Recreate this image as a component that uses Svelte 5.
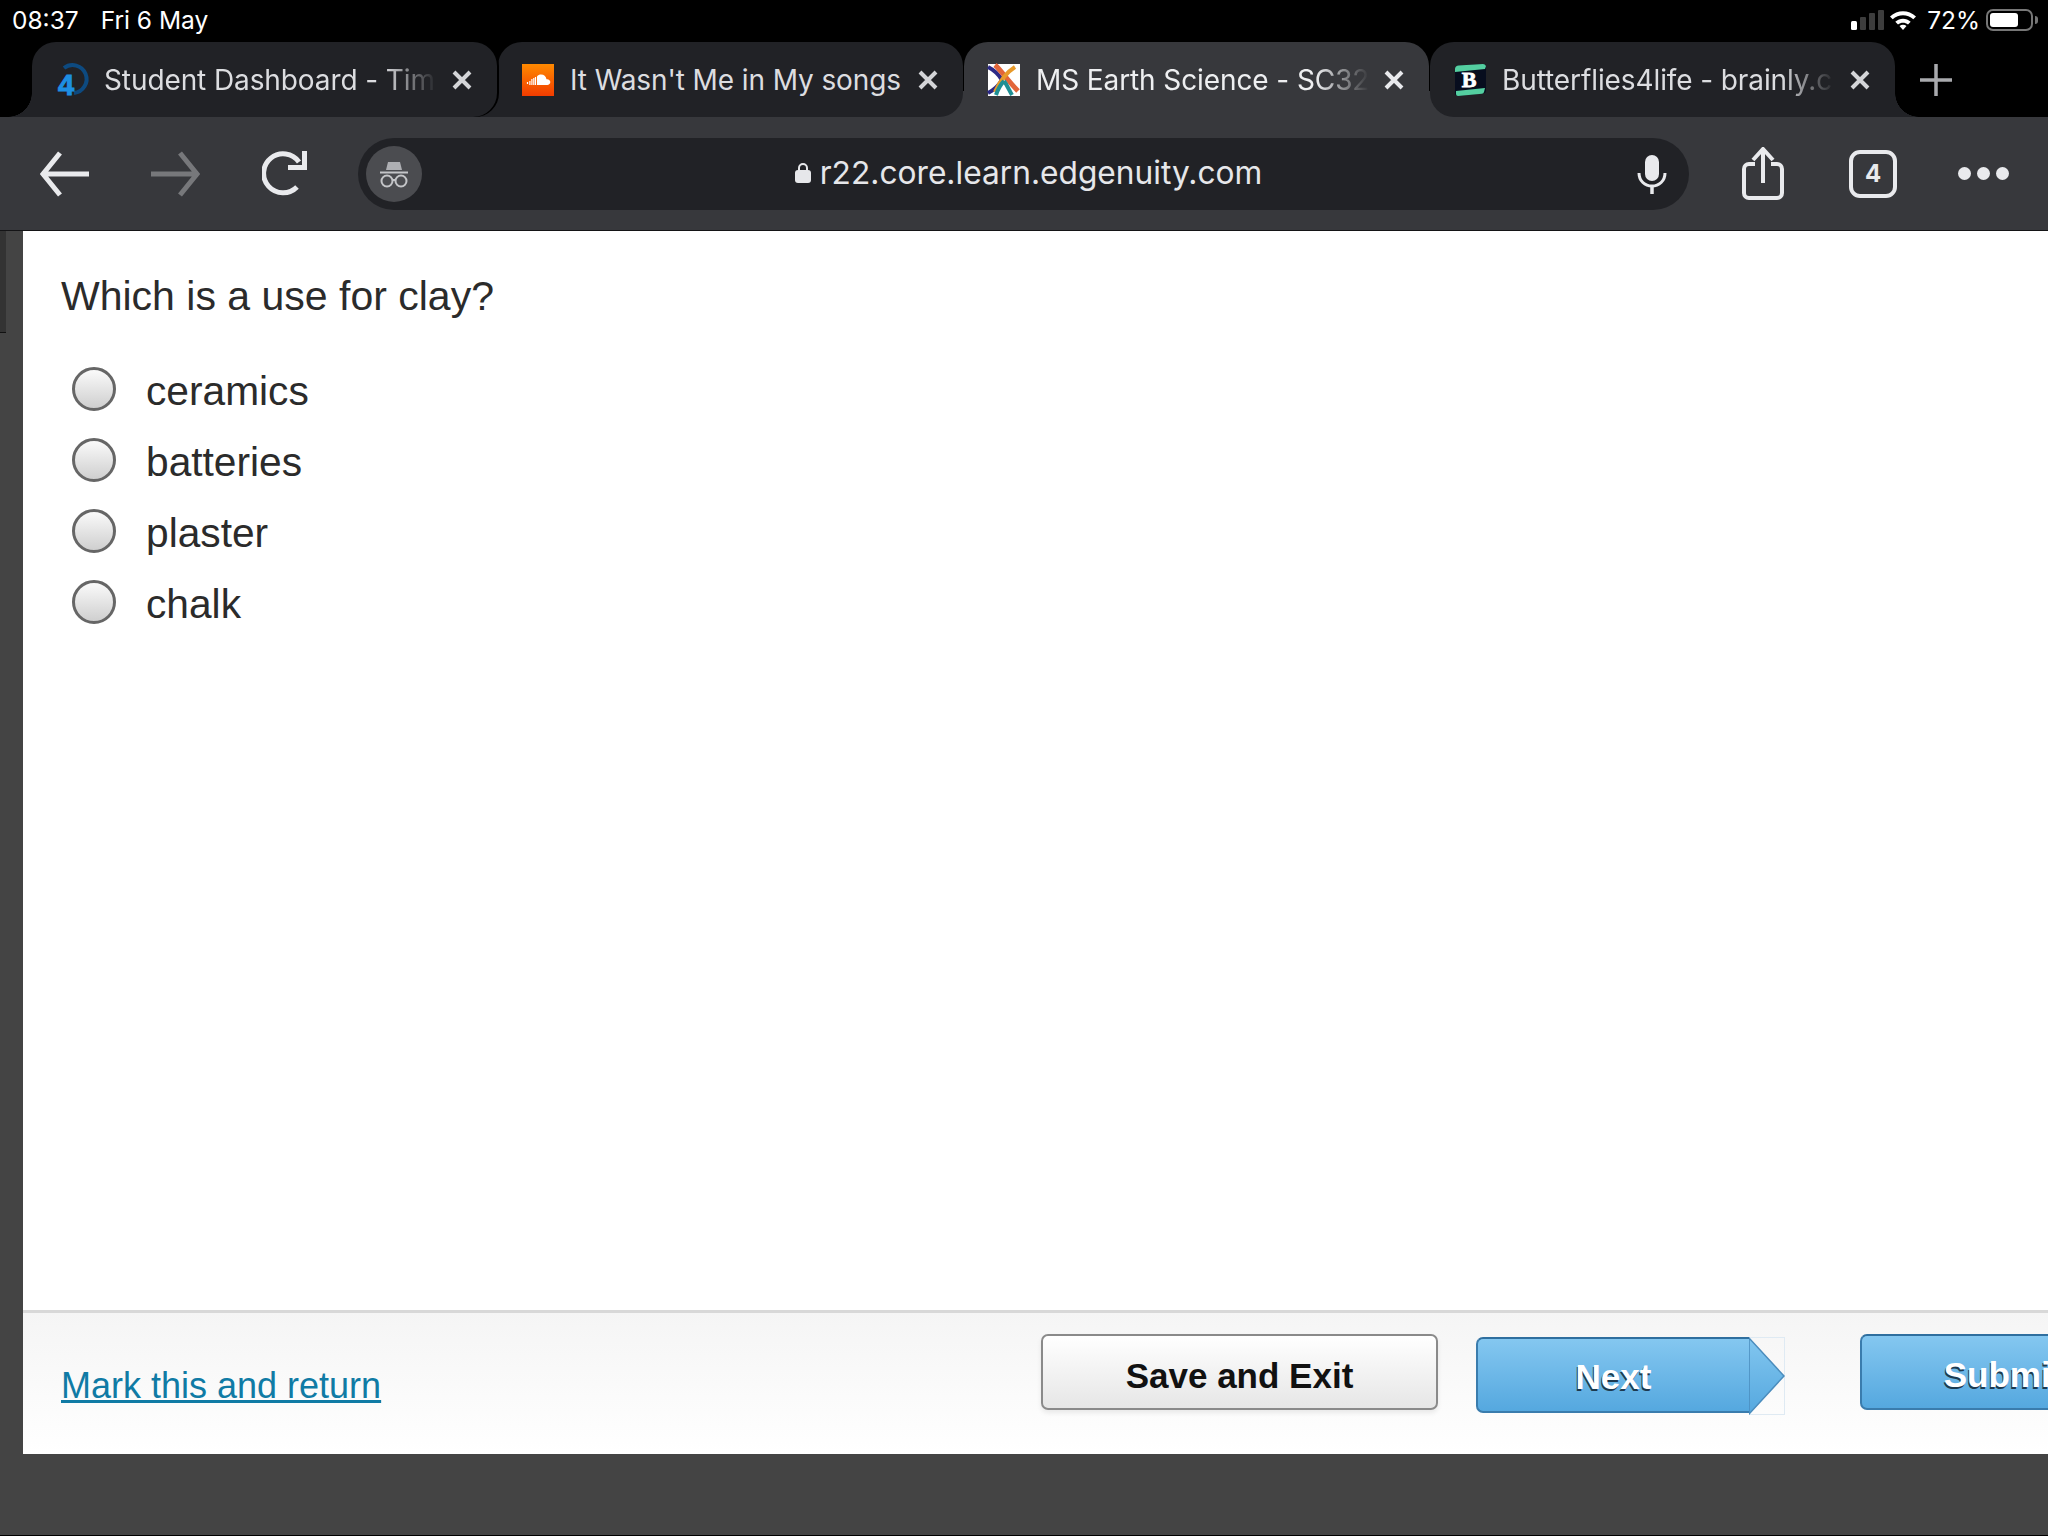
<script>
  let options = ['ceramics', 'batteries', 'plaster', 'chalk'];
  let selected = '';
</script>

{#snippet closeIcon()}
  <svg class="close" width="20" height="20" viewBox="0 0 20 20">
    <path d="M2 2l16 16M18 2 2 18" fill="none" stroke="currentColor" stroke-width="4" />
  </svg>
{/snippet}

<div class="screen">
  <div class="status">
    <span class="time">08:37</span>
    <span class="date">Fri 6 May</span>
    <div class="status-right">
      <svg width="34" height="22" viewBox="0 0 34 22">
        <rect x="0" y="12" width="6" height="9" rx="1.5" fill="#fff" />
        <rect x="9" y="8" width="6" height="13" rx="1" fill="#3d3d3d" />
        <rect x="18" y="4" width="6" height="17" rx="1" fill="#3d3d3d" />
        <rect x="27" y="1" width="6" height="20" rx="1" fill="#3d3d3d" />
      </svg>
      <svg class="wifi" width="30" height="22" viewBox="0 0 28 22">
        <path d="M1 7.5C8.5.5 19.500.5 27 7.500l-2.700 2.800C18.500 5 9.500 5 3.700 10.300z" fill="#fff" />
        <path d="M6.300 12.800c4.500-4 10.900-4 15.400 0L19 15.500c-3-2.500-7-2.500-10 0z" fill="#fff" />
        <path d="M10.500 17c2-1.600 5-1.600 7 0L14 21z" fill="#fff" />
      </svg>
      <span class="pct">72%</span>
      <div class="battery"><div class="battery-fill"></div></div>
      <div class="battery-nub"></div>
    </div>
  </div>

  <div class="tabs">
    <div class="tab first">
      <svg class="favicon" viewBox="0 0 32 32">
        <path d="M8 4A14 14 0 1 1 18 29" fill="none" stroke="#0d4a80" stroke-width="4" />
        <text x="10" y="31" class="four">4</text>
      </svg>
      <span class="title fade">Student Dashboard - Tim</span>
      {@render closeIcon()}
    </div>
    <div class="tab second">
      <svg class="favicon" viewBox="0 0 32 32">
        <defs>
          <linearGradient id="sc" x1="0" y1="0" x2="0" y2="1">
            <stop offset="0" stop-color="#ff8a00" />
            <stop offset="1" stop-color="#f23c00" />
          </linearGradient>
        </defs>
        <rect width="32" height="32" fill="url(#sc)" />
        <path d="M15 21v-8.500c1-1.400 2.500-2 4-2 3 0 5 2 5.500 4.700 2.200-.4 3.800 1.200 3.800 2.900s-1.300 2.900-3 2.900z" fill="#fff" />
        <path d="M11.800 21v-7M13.500 21v-8M9.900 21v-6M7.900 21v-4M5.500 20v-2" stroke="#fff" stroke-width="1.200" />
      </svg>
      <span class="title">It Wasn't Me in My songs</span>
      {@render closeIcon()}
    </div>
    <div class="tab active">
      <svg class="favicon" viewBox="0 0 32 32">
        <rect width="32" height="32" fill="#fff" />
        <path d="M0 3c6 3 11 8 14 13-3 5-8 10-14 13" fill="none" stroke="#2d2a86" stroke-width="4" />
        <path d="M7 1c5 4 13 16 23 26" fill="none" stroke="#e2663a" stroke-width="5" />
        <path d="M27 3C19 8 12 17 7 28" fill="none" stroke="#e89a2a" stroke-width="4" />
        <path d="M16 17c-3 3-6 8-8 14M16 17c3 4 5 9 8 14" fill="none" stroke="#1f8f94" stroke-width="4" />
      </svg>
      <span class="title fade">MS Earth Science - SC32</span>
      {@render closeIcon()}
    </div>
    <div class="tab last">
      <svg class="favicon" viewBox="0 0 32 32">
        <path d="M1 5q0-3 3-3.500L29 0q3 0 3 3v23q0 3-3 3.500L4 32q-3 0-3-3z" fill="#070d1e" />
        <path d="M1 8V5q0-3 3-3.500L29 0q2 0 3 2l-1 3z" fill="#54cfa0" />
        <path d="M2 27l29-3-1 4q-.4 1.800-2 1.800L4 32q-2 0-2-2z" fill="#54cfa0" />
        <text x="15" y="23" class="bee">B</text>
      </svg>
      <span class="title fade">Butterflies4life - brainly.c</span>
      {@render closeIcon()}
    </div>
    <svg class="plus" width="34" height="34" viewBox="0 0 34 34">
      <path d="M17 1v32M1 17h32" stroke="#a9aaae" stroke-width="3.500" />
    </svg>
  </div>

  <div class="toolbar">
    <svg class="nav" width="50" height="46" viewBox="0 0 50 46">
      <path d="M49 23H4M20 2 3 23l17 21" fill="none" stroke="#e9eaed" stroke-width="5" />
    </svg>
    <svg class="nav fwd" width="50" height="46" viewBox="0 0 50 46">
      <path d="M1 23h45M30 2l17 21-17 21" fill="none" stroke="#77787b" stroke-width="5" />
    </svg>
    <svg class="nav reload" width="46" height="46" viewBox="0 0 46 46">
      <path d="M35 36A19.500 19.500 0 1 1 37 11" fill="none" stroke="#e9eaed" stroke-width="5" />
      <path d="M26 16.500h16.500V0" fill="none" stroke="#e9eaed" stroke-width="5" />
    </svg>
    <div class="address">
      <div class="incognito">
        <svg width="30" height="30" viewBox="0 0 30 30">
          <path d="M7 11l2-8h12l2 8z" fill="#aeafb3" />
          <path d="M1 13.500h28" stroke="#c4c5c8" stroke-width="2" />
          <circle cx="8" cy="22" r="5.500" fill="none" stroke="#c4c5c8" stroke-width="2" />
          <circle cx="22" cy="22" r="5.500" fill="none" stroke="#c4c5c8" stroke-width="2" />
          <path d="M13.500 21h3" stroke="#c4c5c8" stroke-width="2" />
        </svg>
      </div>
      <div class="url">
        <svg width="16" height="21" viewBox="0 0 16 21">
          <path d="M4 9V6a4 4 0 0 1 8 0v3" fill="none" stroke="#e6e7ea" stroke-width="2" />
          <rect x="0" y="8" width="16" height="13" rx="3" fill="#e6e7ea" />
        </svg>
        <span>r22.core.learn.edgenuity.com</span>
      </div>
      <svg class="mic" width="30" height="40" viewBox="0 0 30 40">
        <rect x="8" y="1" width="14" height="26" rx="7" fill="#e9eaed" />
        <path d="M2 19c0 8 6 13 13 13s13-5 13-13" fill="none" stroke="#e9eaed" stroke-width="3" />
        <path d="M15 32v8" stroke="#e9eaed" stroke-width="3.500" />
      </svg>
    </div>
    <svg class="share" width="42" height="54" viewBox="0 0 42 54">
      <path d="M13 17H7a5 5 0 0 0-5 5v24a5 5 0 0 0 5 5h28a5 5 0 0 0 5-5V22a5 5 0 0 0-5-5h-6" fill="none" stroke="#e9eaed" stroke-width="4" />
      <path d="M21 36V3M11 13 21 2l10 11" fill="none" stroke="#e9eaed" stroke-width="4" />
    </svg>
    <div class="count">4</div>
    <div class="dots"><i></i><i></i><i></i></div>
  </div>

  <div class="page">
    <div class="strip"><div class="strip-mark"></div></div>
    <div class="sheet">
      <div class="question">
        <h1>Which is a use for clay?</h1>
        <div class="answers">
          {#each options as option}
            <label class="answer">
              <input type="radio" name="answer" value={option} bind:group={selected} />
              <span>{option}</span>
            </label>
          {/each}
        </div>
      </div>
      <div class="footer">
        <a href="#mark" class="mark">Mark this and return</a>
        <button class="save">Save and Exit</button>
        <div class="next">
          <button class="blue next-body">Next</button>
          <svg width="36" height="78" viewBox="0 0 36 78">
            <rect x="0.500" y="0.500" width="35" height="77" fill="none" stroke="#dfeaf3" />
            <defs>
              <linearGradient id="arrow" x1="0" y1="0" x2="0" y2="1">
                <stop offset="0" stop-color="#82c6ef" />
                <stop offset="1" stop-color="#55a8df" />
              </linearGradient>
            </defs>
            <path d="M0 1 35 39 0 77z" fill="url(#arrow)" stroke="#4a8cbd" stroke-width="1.500" />
          </svg>
        </div>
        <button class="blue submit">Submit</button>
      </div>
    </div>
  </div>
  <div class="bottom"></div>
</div>

<style>
  :global(body) {
    margin: 0;
    background: #444;
  }
  .screen {
    width: 2048px;
    height: 1536px;
    overflow: hidden;
    display: flex;
    flex-direction: column;
    background: #000;
    font-family: Inter, "Liberation Sans", sans-serif;
  }

  .status {
    height: 40px;
    margin-bottom: 2px;
    display: flex;
    align-items: center;
    padding: 0 10px 0 12px;
    color: #fff;
    font-size: 24.500px;
    box-sizing: border-box;
  }
  .date {
    margin-left: 22px;
  }
  .status-right {
    margin-left: auto;
    display: flex;
    align-items: center;
  }
  .wifi {
    margin-left: 3px;
  }
  .pct {
    margin-left: 9px;
  }
  .battery {
    margin-left: 6px;
    width: 47px;
    height: 22px;
    border: 2px solid #777;
    border-radius: 7px;
    box-sizing: border-box;
    padding: 2px;
  }
  .battery-fill {
    width: 28px;
    height: 14px;
    background: #fff;
    border-radius: 3px;
  }
  .battery-nub {
    width: 3px;
    height: 8px;
    margin-left: 2px;
    background: #777;
    border-radius: 0 3px 3px 0;
  }

  .tabs {
    height: 75px;
    display: flex;
    align-items: stretch;
    padding-left: 32px;
  }
  .tab {
    position: relative;
    width: 465px;
    margin-right: 1px;
    box-sizing: border-box;
    display: flex;
    align-items: center;
    padding: 0 25px 0 24px;
    background: #212226;
    border-radius: 24px;
    color: #dcdde0;
    font-size: 28px;
    letter-spacing: -0.100px;
  }
  .favicon {
    width: 32px;
    height: 32px;
    flex: none;
    overflow: visible;
  }
  .title {
    flex: 1;
    min-width: 0;
    margin: 0 15px 0 16px;
    white-space: nowrap;
  }
  .fade {
    mask-image: linear-gradient(to right, #000 84%, transparent 100%);
  }
  .close {
    flex: none;
    color: #d4d5d8;
  }
  .four {
    font: bold 29px "Liberation Sans", sans-serif;
    fill: #1d8fe3;
    stroke: #1d8fe3;
    stroke-width: 1;
    text-anchor: middle;
  }
  .bee {
    font: bold 22px "Liberation Serif", serif;
    fill: #fff;
    stroke: #fff;
    stroke-width: 0.800;
    text-anchor: middle;
  }

  .first {
    z-index: 2;
    border-bottom-left-radius: 0;
    box-shadow: 2px 0 0 #000;
  }
  .first::before {
    content: '';
    position: absolute;
    left: -24px;
    bottom: 0;
    width: 24px;
    height: 24px;
    background: radial-gradient(circle at 0 0, #000 23.500px, #212226 24px);
  }
  .second {
    z-index: 1;
    border-bottom-left-radius: 0;
  }
  .second::before {
    content: '';
    position: absolute;
    left: -24px;
    bottom: 0;
    width: 24px;
    height: 24px;
    background: #212226;
  }
  .active {
    background: #37383c;
    color: #eeeff1;
    border-radius: 24px 24px 0 0;
  }
  .active::before,
  .active::after {
    content: '';
    position: absolute;
    bottom: 0;
    width: 26px;
    height: 26px;
    background: #37383c;
  }
  .active::before {
    left: -26px;
  }
  .active::after {
    right: -26px;
  }
  .active .close {
    color: #e9eaed;
  }
  .last {
    z-index: 1;
    border-bottom-right-radius: 0;
  }
  .last::after {
    content: '';
    position: absolute;
    right: -24px;
    bottom: 0;
    width: 24px;
    height: 24px;
    background: radial-gradient(circle at 100% 0, #000 23.500px, #212226 24px);
  }
  .plus {
    align-self: center;
    margin-left: 23px;
  }

  .toolbar {
    height: 114px;
    box-sizing: border-box;
    border-bottom: 1px solid #141416;
    background: #37383c;
    display: flex;
    align-items: center;
    padding-left: 40px;
  }
  .nav {
    flex: none;
  }
  .fwd {
    margin-left: 60px;
  }
  .reload {
    margin-left: 62px;
  }
  .address {
    margin-left: 50px;
    width: 1331px;
    height: 72px;
    flex: none;
    box-sizing: border-box;
    border-radius: 36px;
    background: #212226;
    display: flex;
    align-items: center;
    padding: 0 22px 0 8px;
  }
  .incognito {
    width: 56px;
    height: 56px;
    border-radius: 50%;
    background: #4b4c50;
    display: flex;
    align-items: center;
    justify-content: center;
  }
  .url {
    flex: 1;
    display: flex;
    align-items: center;
    justify-content: center;
    gap: 9px;
    margin: -2px 2px 0 0;
    color: #e6e7ea;
    font-size: 31.700px;
  }
  .share {
    margin-left: 53px;
    flex: none;
  }
  .count {
    margin-left: 65px;
    width: 48px;
    height: 48px;
    flex: none;
    box-sizing: border-box;
    border: 4.500px solid #e9eaed;
    border-radius: 11px;
    display: flex;
    align-items: center;
    justify-content: center;
    color: #e9eaed;
    font-size: 24px;
    font-weight: 700;
  }
  .dots {
    margin-left: 61px;
    display: flex;
    gap: 6px;
  }
  .dots i {
    width: 13px;
    height: 13px;
    border-radius: 50%;
    background: #e9eaed;
  }

  .page {
    height: 1223px;
    display: flex;
    background: #444;
  }
  .strip {
    width: 23px;
    flex: none;
  }
  .strip-mark {
    width: 6px;
    height: 101px;
    background: #333;
    border-bottom: 1px solid #111;
  }
  .sheet {
    flex: 1;
    min-width: 0;
    display: flex;
    flex-direction: column;
    background: #fff;
    font-family: "Liberation Sans", Arial, sans-serif;
  }
  .question {
    flex: 1;
    padding: 0 0 0 38px;
    color: #2b2b2b;
  }
  h1 {
    margin: 41px 0 0;
    font-size: 41px;
    font-weight: normal;
    line-height: 48px;
  }
  .answers {
    margin: 33px 0 0 1px;
  }
  .answer {
    height: 71px;
    display: flex;
    align-items: center;
    padding-left: 10px;
    font-size: 40.700px;
  }
  .answer input {
    appearance: none;
    margin: 0 30px 0 0;
    width: 44px;
    height: 44px;
    box-sizing: border-box;
    border: 3px solid #666;
    border-radius: 50%;
    background: linear-gradient(#fafafa, #cfcfcf);
  }
  .answer span {
    position: relative;
    top: 3px;
  }

  .footer {
    height: 144px;
    flex: none;
    box-sizing: border-box;
    border-top: 3px solid #d8d8d8;
    background: linear-gradient(#f5f5f5, #fff);
    display: flex;
    align-items: flex-start;
    padding-left: 38px;
    overflow: hidden;
  }
  .mark {
    margin-top: 51px;
    width: 318px;
    flex: none;
    color: #107ba5;
    font-size: 36px;
    line-height: 44px;
    white-space: nowrap;
  }
  button {
    font-family: inherit;
    font-size: 35px;
    font-weight: bold;
    padding: 0;
    flex: none;
  }
  .save {
    margin: 21px 0 0 662px;
    padding-top: 7px;
    width: 397px;
    height: 76px;
    border: 2px solid #8a8a8a;
    border-radius: 7px;
    background: linear-gradient(#fff, #e6e6e6);
    color: #111;
    box-shadow: 0 3px 5px rgba(0, 0, 0, 0.08);
  }
  .blue {
    border: 2px solid #3a7cad;
    border-top-color: #2f6f9f;
    background: linear-gradient(#84c7f0, #55a8df);
    color: #fff;
    text-shadow: -1px 2px 0 #1c3a50;
  }
  .next {
    margin: 24px 0 0 38px;
    display: flex;
    flex: none;
  }
  .next-body {
    padding-top: 3px;
    width: 273px;
    height: 76px;
    border-right: none;
    border-radius: 7px 0 0 7px;
  }
  .submit {
    margin: 21px 0 0 75px;
    padding-top: 6px;
    width: 286px;
    height: 76px;
    border-radius: 7px;
  }
  .bottom {
    flex: 1;
    background: #444;
    border-bottom: 1px solid #000;
  }
</style>
